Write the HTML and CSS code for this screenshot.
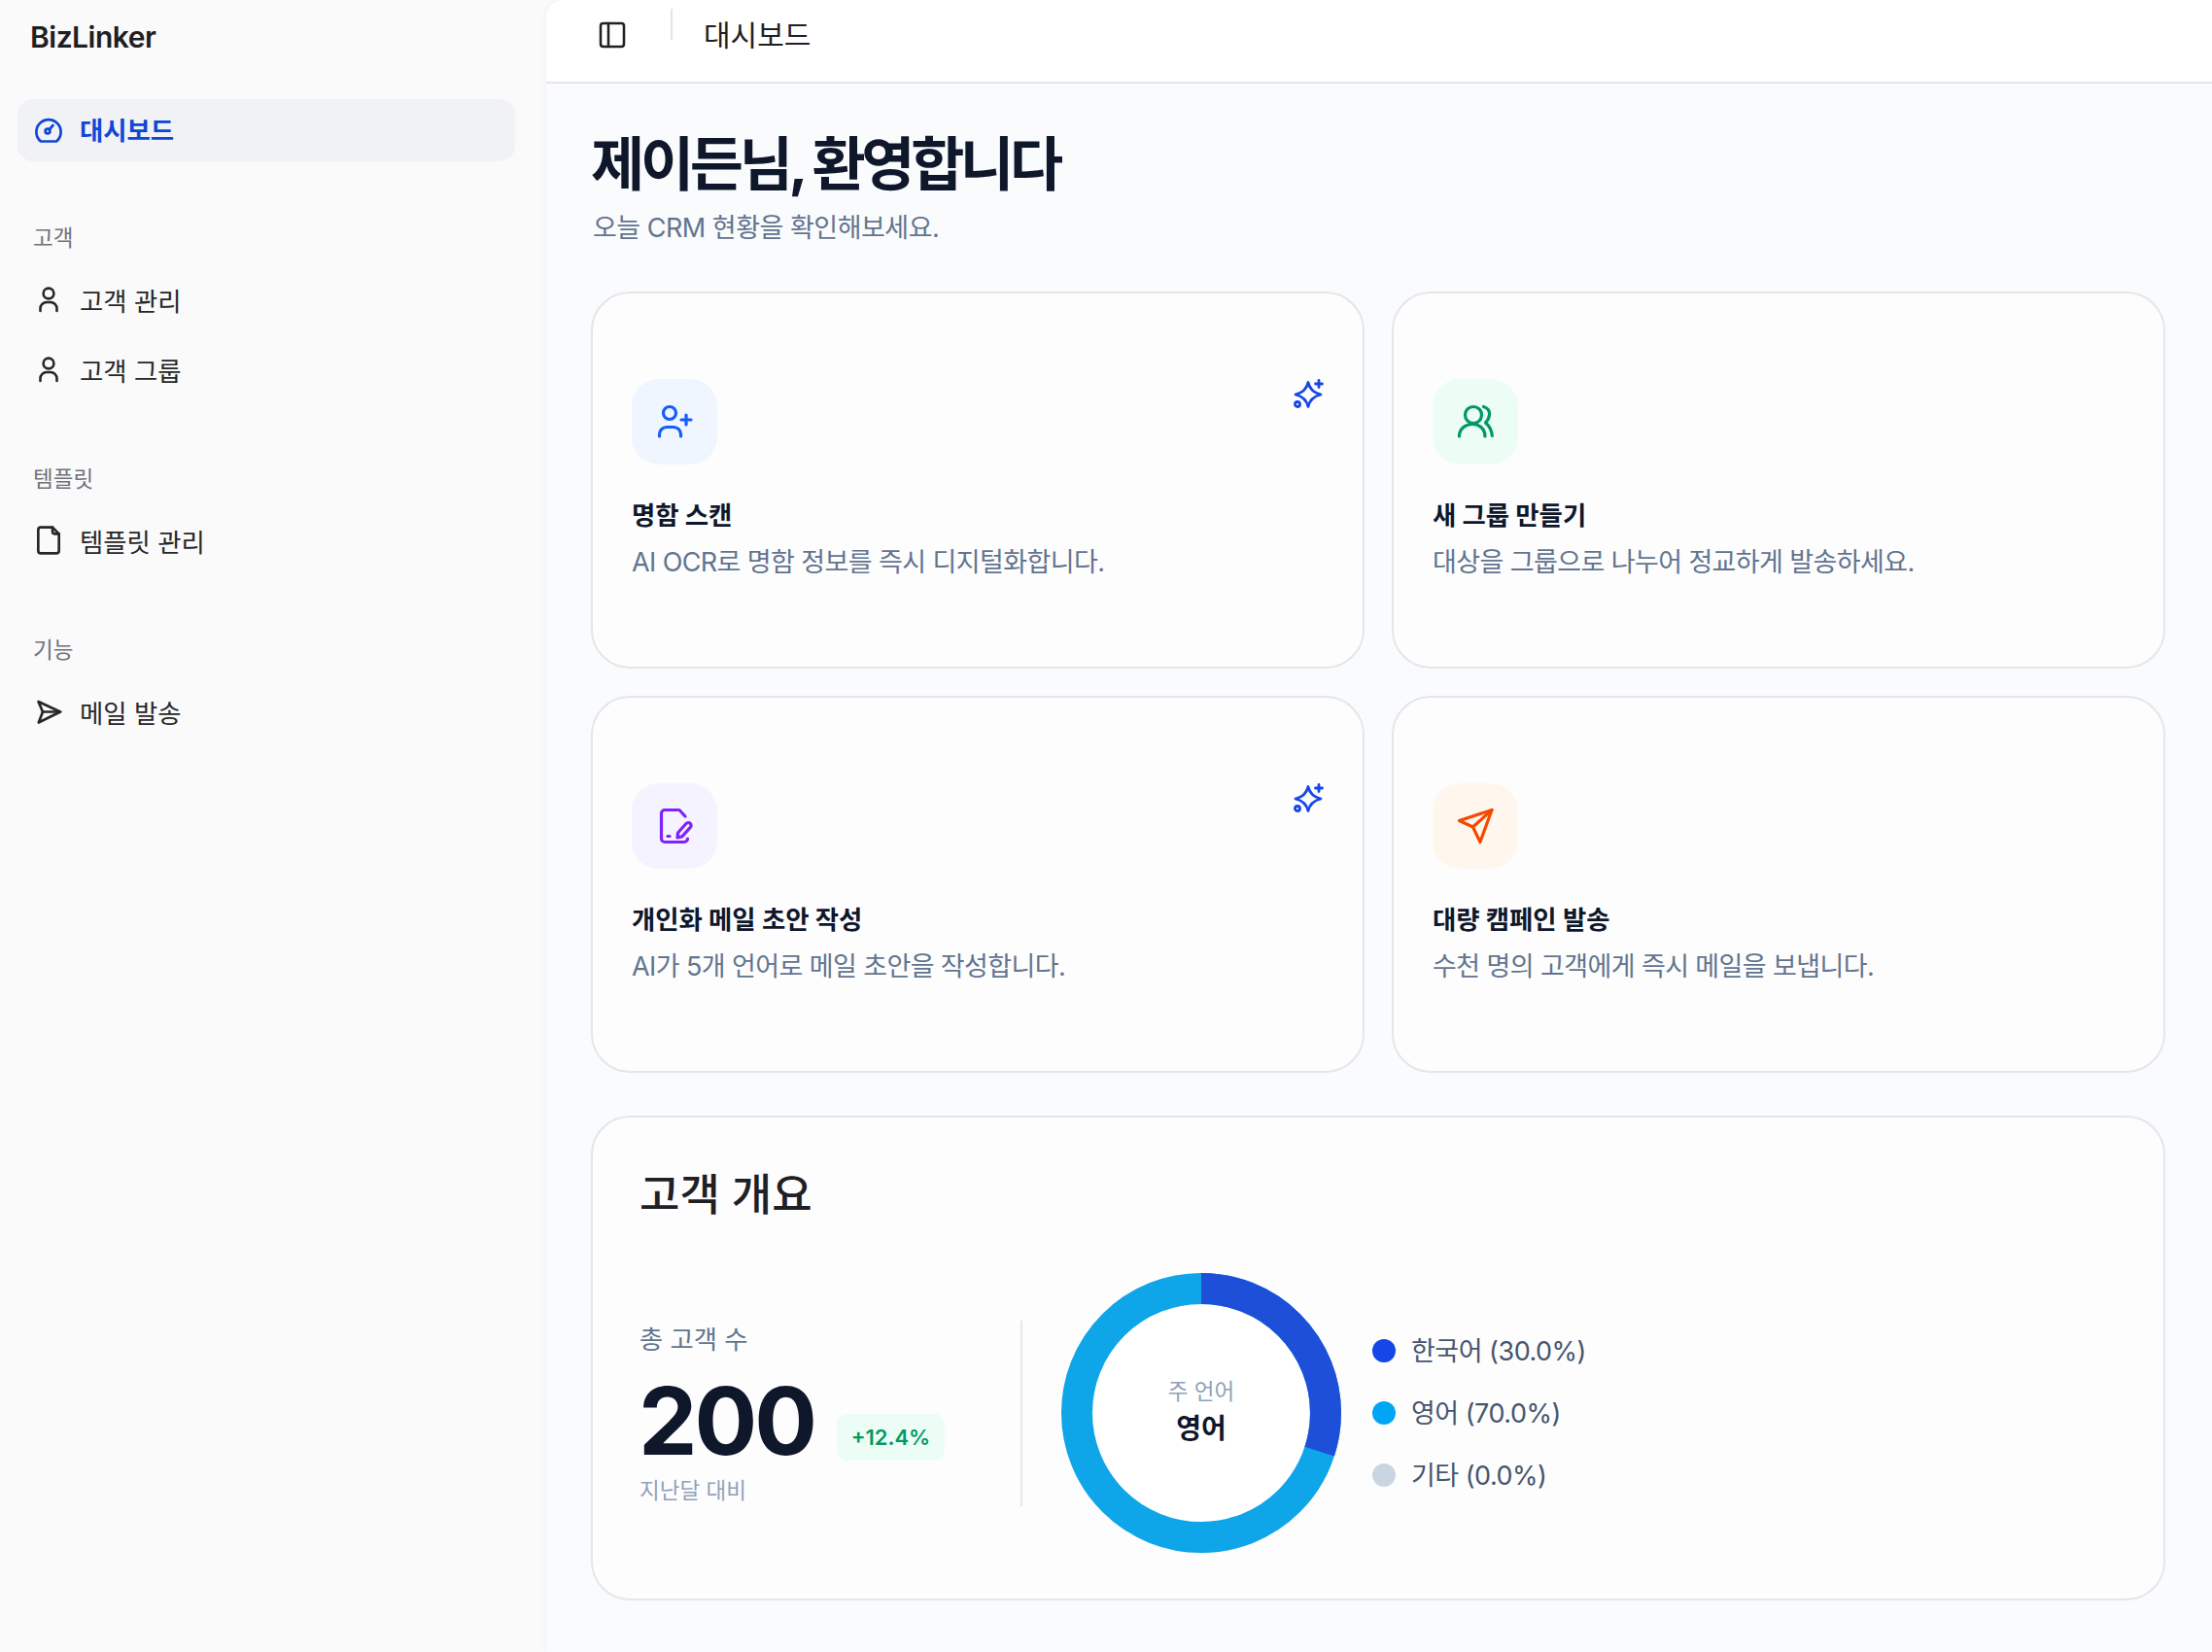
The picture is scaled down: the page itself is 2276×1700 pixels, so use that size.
FILE: index.html
```html
<!DOCTYPE html>
<html lang="ko">
<head>
<meta charset="utf-8">
<title>BizLinker</title>
<link rel="stylesheet" href="styles.css">
</head>
<body>
<div class="app">
  <aside class="sidebar">
    <div class="brand">BizLinker</div>
    <nav class="nav">
      <a class="nav-item active">
        <svg class="nav-icon" viewBox="0 0 32 32" fill="none" stroke="currentColor" stroke-width="2.7" stroke-linecap="round" stroke-linejoin="round"><path d="M8 27.5h16a12.6 12.6 0 1 0-16 0z"/><circle cx="15" cy="17" r="2.4"/><path d="m17 15 3.5-4"/></svg>
        <span>대시보드</span>
      </a>
      <div class="nav-group">
        <div class="nav-label">고객</div>
        <a class="nav-item">
          <svg class="nav-icon" viewBox="0 0 32 32" fill="none" stroke="currentColor" stroke-width="2.6" stroke-linecap="round"><circle cx="16" cy="10" r="5.4"/><path d="M7.5 28v-2.500a6.500 6.500 0 0 1 6.500-6.500h4a6.500 6.500 0 0 1 6.500 6.500v2.500"/></svg>
          <span>고객 관리</span>
        </a>
        <a class="nav-item">
          <svg class="nav-icon" viewBox="0 0 32 32" fill="none" stroke="currentColor" stroke-width="2.6" stroke-linecap="round"><circle cx="16" cy="10" r="5.4"/><path d="M7.500 28v-2.500a6.500 6.500 0 0 1 6.500-6.500h4a6.500 6.500 0 0 1 6.500 6.500v2.500"/></svg>
          <span>고객 그룹</span>
        </a>
      </div>
      <div class="nav-group">
        <div class="nav-label">템플릿</div>
        <a class="nav-item">
          <svg class="nav-icon" viewBox="0 0 24 24" fill="none" stroke="currentColor" stroke-width="2" stroke-linecap="round" stroke-linejoin="round"><path d="M15 2H6a2 2 0 0 0-2 2v16a2 2 0 0 0 2 2h12a2 2 0 0 0 2-2V7Z"/><path d="M15 2v3a2 2 0 0 0 2 2h3"/></svg>
          <span>템플릿 관리</span>
        </a>
      </div>
      <div class="nav-group">
        <div class="nav-label">기능</div>
        <a class="nav-item">
          <svg class="nav-icon" viewBox="0 0 32 32" fill="none" stroke="currentColor" stroke-width="2.700" stroke-linecap="round" stroke-linejoin="round"><path d="M5.500 6 28 16.500 5.800 27.500l4.200-11z"/><path d="M10 16.500h18"/></svg>
          <span>메일 발송</span>
        </a>
      </div>
    </nav>
  </aside>

  <main class="main">
    <header class="topbar">
      <svg class="panel-icon" viewBox="0 0 24 24" fill="none" stroke="currentColor" stroke-width="1.900" stroke-linecap="round" stroke-linejoin="round"><rect x="3" y="3" width="18" height="18" rx="2"/><path d="M9 3v18"/></svg>
      <div class="topbar-divider"></div>
      <div class="topbar-title">대시보드</div>
    </header>

    <div class="content">
      <h1 class="welcome">제이든님, 환영합니다</h1>
      <p class="subtitle">오늘 CRM 현황을 확인해보세요.</p>

      <section class="actions">
        <article class="card">
          <div class="card-top">
            <div class="tile tile-blue">
              <svg class="tile-icon" viewBox="0 0 40 40" fill="none" stroke="currentColor" stroke-width="3.200" stroke-linecap="round" stroke-linejoin="round"><circle cx="15" cy="11" r="6.500"/><path d="M4.500 35v-2a7.500 7.500 0 0 1 7.500-7.500h7a7.500 7.500 0 0 1 7.500 7.500v2"/><path d="M32 13v10M27 18h10"/></svg>
            </div>
            <svg class="spark" viewBox="0 0 32 32" fill="none" stroke="currentColor" stroke-width="2.800" stroke-linecap="round" stroke-linejoin="round"><path d="M16 3.500C17.500 10 21.500 14.200 29 16 21.500 17.800 17.500 22 16 28.500 14.500 22 10.500 17.800 3 16 10.500 14.200 14.500 10 16 3.500z"/><path d="M27 1.500v7M23.500 5h7"/><circle cx="5" cy="26" r="2.500"/></svg>
          </div>
          <h2 class="card-title">명함 스캔</h2>
          <p class="card-desc">AI OCR로 명함 정보를 즉시 디지털화합니다.</p>
        </article>

        <article class="card">
          <div class="card-top">
            <div class="tile tile-green">
              <svg class="tile-icon" viewBox="0 0 40 40" fill="none" stroke="currentColor" stroke-width="3.200" stroke-linecap="round" stroke-linejoin="round"><circle cx="18" cy="13" r="8.500"/><path d="M3.500 35C3.500 27 10 22.500 17 22.500S30 27 30 35"/><path d="M28.500 4.500C33 6 35 9 34.500 13c-.5 4-2.500 6.500-4 8 3.500 3 6.500 8 6.800 13.500"/></svg>
            </div>
          </div>
          <h2 class="card-title">새 그룹 만들기</h2>
          <p class="card-desc">대상을 그룹으로 나누어 정교하게 발송하세요.</p>
        </article>

        <article class="card">
          <div class="card-top">
            <div class="tile tile-violet">
              <svg class="tile-icon" viewBox="0 0 40 40" fill="none" stroke="currentColor" stroke-width="3.200" stroke-linecap="round" stroke-linejoin="round"><path d="M31 10l-6-6.500H10a3.500 3.500 0 0 0-3.500 3.500v26a3.500 3.500 0 0 0 3.500 3.500h20a3.500 3.500 0 0 0 3.500-3.500"/><path d="M23.500 27l8.500-9.500a2.900 2.900 0 0 1 4.300 3.900l-8.500 9.500-4.800 1z"/><path d="M13 30.500h2"/></svg>
            </div>
            <svg class="spark" viewBox="0 0 32 32" fill="none" stroke="currentColor" stroke-width="2.800" stroke-linecap="round" stroke-linejoin="round"><path d="M16 3.500C17.500 10 21.500 14.200 29 16 21.500 17.800 17.500 22 16 28.500 14.500 22 10.500 17.800 3 16 10.500 14.200 14.500 10 16 3.500z"/><path d="M27 1.500v7M23.500 5h7"/><circle cx="5" cy="26" r="2.500"/></svg>
          </div>
          <h2 class="card-title">개인화 메일 초안 작성</h2>
          <p class="card-desc">AI가 5개 언어로 메일 초안을 작성합니다.</p>
        </article>

        <article class="card">
          <div class="card-top">
            <div class="tile tile-orange">
              <svg class="tile-icon" viewBox="0 0 40 40" fill="none" stroke="currentColor" stroke-width="3.200" stroke-linecap="round" stroke-linejoin="round"><path d="M37 3.500 3.500 14.500l14 6.500 7.500 15.500z"/><path d="M17.500 21 37 3.500"/></svg>
            </div>
          </div>
          <h2 class="card-title">대량 캠페인 발송</h2>
          <p class="card-desc">수천 명의 고객에게 즉시 메일을 보냅니다.</p>
        </article>
      </section>

      <section class="overview">
        <h2 class="overview-title">고객 개요</h2>
        <div class="overview-body">
          <div class="stat">
            <div class="stat-label">총 고객 수</div>
            <div class="stat-row">
              <span class="stat-value">200</span>
              <span class="stat-pill">+12.4%</span>
            </div>
            <div class="stat-note">지난달 대비</div>
          </div>
          <div class="donut">
            <svg class="donut-svg" viewBox="0 0 288 288">
              <circle class="ring ring-sky" cx="144" cy="144" r="128"/>
              <circle class="ring ring-blue" cx="144" cy="144" r="128"/>
            </svg>
            <div class="donut-center">
              <span class="donut-label">주 언어</span>
              <span class="donut-value">영어</span>
            </div>
          </div>
          <ul class="legend">
            <li class="legend-item"><i class="dot dot-blue"></i><span class="legend-text">한국어 (30.0%)</span></li>
            <li class="legend-item"><i class="dot dot-sky"></i><span class="legend-text">영어 (70.0%)</span></li>
            <li class="legend-item"><i class="dot dot-gray"></i><span class="legend-text">기타 (0.0%)</span></li>
          </ul>
        </div>
      </section>
    </div>
  </main>
</div>
</body>
</html>
```

FILE: styles.css
```css
* { box-sizing: border-box; }
html, body { margin: 0; height: 100%; }
body {
  font-family: Inter, "Noto Sans CJK KR", sans-serif;
  background: #fafafa;
  color: #18181b;
}
.app { display: flex; height: 1700px; overflow: hidden; }

.sidebar { width: 562px; flex: none; background: #fafafa; padding: 0 32px 0 18px; }
.brand {
  height: 76px; padding-left: 13px; display: flex; align-items: center;
  font-size: 30px; font-weight: 600; letter-spacing: -0.5px; color: #1f2023;
}
.nav { margin-top: 26px; display: flex; flex-direction: column; }
.nav-item {
  display: flex; align-items: center; gap: 16px; height: 64px; padding-left: 16px;
  border-radius: 16px; font-size: 26.4px; color: #27272a;
}
.nav-item + .nav-item { margin-top: 8px; }
.nav-item.active { background: #f1f2f6; color: #0f47d4; font-weight: 700; }
.nav-item.active span { padding-bottom: 4px; }
.nav-icon { width: 32px; height: 32px; flex: none; }
.nav-group { margin-top: 59px; }
.nav-group:first-of-type { margin-top: 57px; }
.nav-label {
  height: 40px; margin-bottom: 13px; padding-left: 16px; display: flex; align-items: center;
  font-size: 22.5px; color: #71717a;
}

.main {
  flex: 1; min-width: 0; background: #fafbfd; border-top-left-radius: 18px;
  box-shadow: 0 0 6px rgba(0,0,0,.05); overflow: hidden;
}
.topbar {
  height: 86px; background: #fff; border-bottom: 2px solid #e4e4e9;
  display: flex; align-items: flex-start; padding-left: 52px; color: #1f2023;
}
.panel-icon { width: 32px; height: 32px; margin-top: 20px; flex: none; }
.topbar-divider { width: 2px; height: 32px; margin: 9px 32px 0 44px; background: #e4e4e7; }
.topbar-title { font-size: 30px; line-height: 72px; }

.content { padding: 0 48px 0 46px; }
.welcome {
  margin: 43px 0 0; font-size: 60px; line-height: 80px; font-weight: 700;
  letter-spacing: -4.300px; color: #0f172b;
}
.subtitle { margin: 6px 0 0; font-size: 27px; line-height: 40px; color: #62748e; letter-spacing: -0.500px; padding-left: 2px; }

.actions { display: grid; grid-template-columns: 1fr 1fr; grid-auto-rows: 388px; gap: 28px; margin-top: 45px; }
.card {
  background: #fdfdfe; border: 2px solid #e4e6ea; border-radius: 40px;
  padding: 0 40px; display: flex; flex-direction: column; justify-content: center;
}
.card-top { display: flex; justify-content: space-between; align-items: flex-start; }
.tile { width: 88px; height: 88px; border-radius: 28px; display: flex; align-items: center; justify-content: center; }
.tile-icon { width: 40px; height: 40px; }
.tile-blue { background: #eff6ff; color: #155dfc; }
.tile-green { background: #ecfdf5; color: #009966; }
.tile-violet { background: #f5f3ff; color: #7f22fe; }
.tile-orange { background: #fff7ed; color: #f54900; }
.spark { width: 32px; height: 32px; color: #1447e6; }
.card-title { margin: 32px 0 0; font-size: 26.4px; line-height: 40px; font-weight: 700; color: #0f172b; }
.card-desc { margin: 9px 0 0; font-size: 27px; line-height: 40px; color: #62748e; letter-spacing: -0.600px; }

.overview {
  margin-top: 44px; height: 499px; background: #fdfdfe; border: 2px solid #e4e6ea;
  border-radius: 40px; padding: 50px 48px 47px;
}
.overview-title { margin: 0; font-size: 45px; line-height: 60px; font-weight: 500; color: #1f2023; }
.overview-body { display: flex; align-items: center; margin-top: 50px; height: 288px; }
.stat { width: 394px; height: 191px; flex: none; border-right: 2px solid #e2e8f0; }
.stat-label { font-size: 26.3px; line-height: 40px; color: #62748e; }
.stat-row { display: flex; align-items: flex-end; margin-top: 22px; height: 82px; }
.stat-value { font-size: 96px; line-height: 82px; font-weight: 700; letter-spacing: -3px; margin-left: -1px; color: #0f172b; }
.stat-pill {
  margin-left: 23px; height: 48px; width: 111px; border-radius: 10px; background: #ecfdf5;
  color: #009966; font-size: 22px; font-weight: 600; display: flex; align-items: center; justify-content: center;
}
.stat-note { margin-top: 15px; font-size: 22.5px; line-height: 32px; color: #90a1b9; }

.donut { position: relative; width: 288px; height: 288px; flex: none; margin-left: 40px; }
.donut-svg { display: block; width: 288px; height: 288px; transform: rotate(-90deg); }
.ring { fill: none; stroke-width: 32; }
.ring-sky { stroke: #0ea5e9; fill: #fff; }
.ring-blue { stroke: #1d4fd8; stroke-dasharray: 241.27 804.25; }
.donut-center {
  position: absolute; inset: 0;
  display: flex; flex-direction: column; align-items: center; justify-content: center;
}
.donut-label { font-size: 22.5px; line-height: 28px; margin-bottom: 4px; color: #90a1b9; }
.donut-value { font-size: 28px; line-height: 40px; font-weight: 600; color: #0f172b; }

.legend { list-style: none; margin: 0 0 0 32px; padding: 0; display: flex; flex-direction: column; }
.legend-item { display: flex; align-items: center; gap: 16px; height: 64px; font-size: 27px; letter-spacing: -0.500px; color: #45556c; }
.legend-text { padding-bottom: 4px; }
.dot { width: 24px; height: 24px; border-radius: 50%; flex: none; }
.dot-blue { background: #1447e6; }
.dot-sky { background: #00a6f4; }
.dot-gray { background: #cad5e2; }
```
